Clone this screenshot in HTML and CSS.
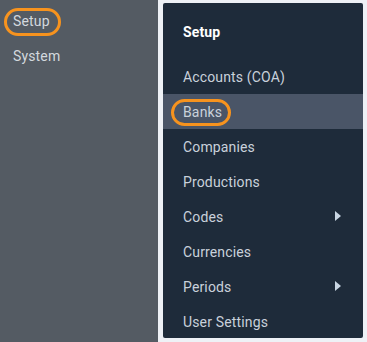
FILE: index.html
```html
<!DOCTYPE html>
<html lang="en">
<head>
    <meta charset="UTF-8">
    <meta name="viewport" content="width=device-width, initial-scale=1.0">
    <title>Setup Menu</title>
    <link rel="stylesheet" href="styles.css">
</head>
<body>
    <div class="sidebar">
        <div class="side-item">
            Setup
            <span class="mark mark-setup"></span>
        </div>
        <div class="side-item">System</div>
    </div>

    <div class="menu-wrap">
        <div class="menu">
            <div class="menu-title">Setup</div>
            <div class="menu-item">Accounts (COA)</div>
            <div class="menu-item active">
                Banks
                <span class="mark mark-banks"></span>
            </div>
            <div class="menu-item">Companies</div>
            <div class="menu-item">Productions</div>
            <div class="menu-item has-sub">Codes <span class="arrow"></span></div>
            <div class="menu-item">Currencies</div>
            <div class="menu-item has-sub">Periods <span class="arrow"></span></div>
            <div class="menu-item">User Settings</div>
        </div>
    </div>
</body>
</html>
```

FILE: styles.css
```css
body {
    margin: 0;
    font-family: Roboto, "Noto Sans", Arial, sans-serif;
    font-size: 14px;
    letter-spacing: 0.15px;
    background: #eef1f6;
    display: flex;
    height: 342px;
    overflow: hidden;
}

/* Left nav */
.sidebar {
    width: 158px;
    background: #545b63;
    padding-top: 4px;
}

.side-item {
    position: relative;
    height: 35px;
    line-height: 35px;
    padding-left: 13px;
    color: #d3d8de;
}

/* Orange annotation rings */
.mark {
    position: absolute;
    border: 3px solid #f7931e;
    border-radius: 15px;
    box-sizing: border-box;
}

.mark-setup {
    left: 4px;
    top: 4px;
    width: 57px;
    height: 28px;
}

.mark-banks {
    left: 8px;
    top: 5px;
    width: 60px;
    height: 27px;
}

/* Flyout menu */
.menu-wrap {
    flex: 1;
    padding: 3px 4px 4px 5px;
}

.menu {
    background: #1e2b3a;
    border-radius: 2px;
    height: 335px;
    overflow: hidden;
}

.menu-title {
    height: 56px;
    line-height: 58px;
    padding-left: 20px;
    color: #ffffff;
    font-weight: bold;
}

.menu-item {
    position: relative;
    box-sizing: border-box;
    height: 35px;
    line-height: 33px;
    padding: 2px 22px 0 20px;
    color: #c9d1db;
    display: flex;
    justify-content: space-between;
    align-items: center;
}

.menu-item.active {
    background: #4a5567;
}

.arrow {
    width: 0;
    height: 0;
    border-top: 5px solid transparent;
    border-bottom: 5px solid transparent;
    border-left: 6px solid #c9d6e3;
    margin-top: -4px;
}
```
